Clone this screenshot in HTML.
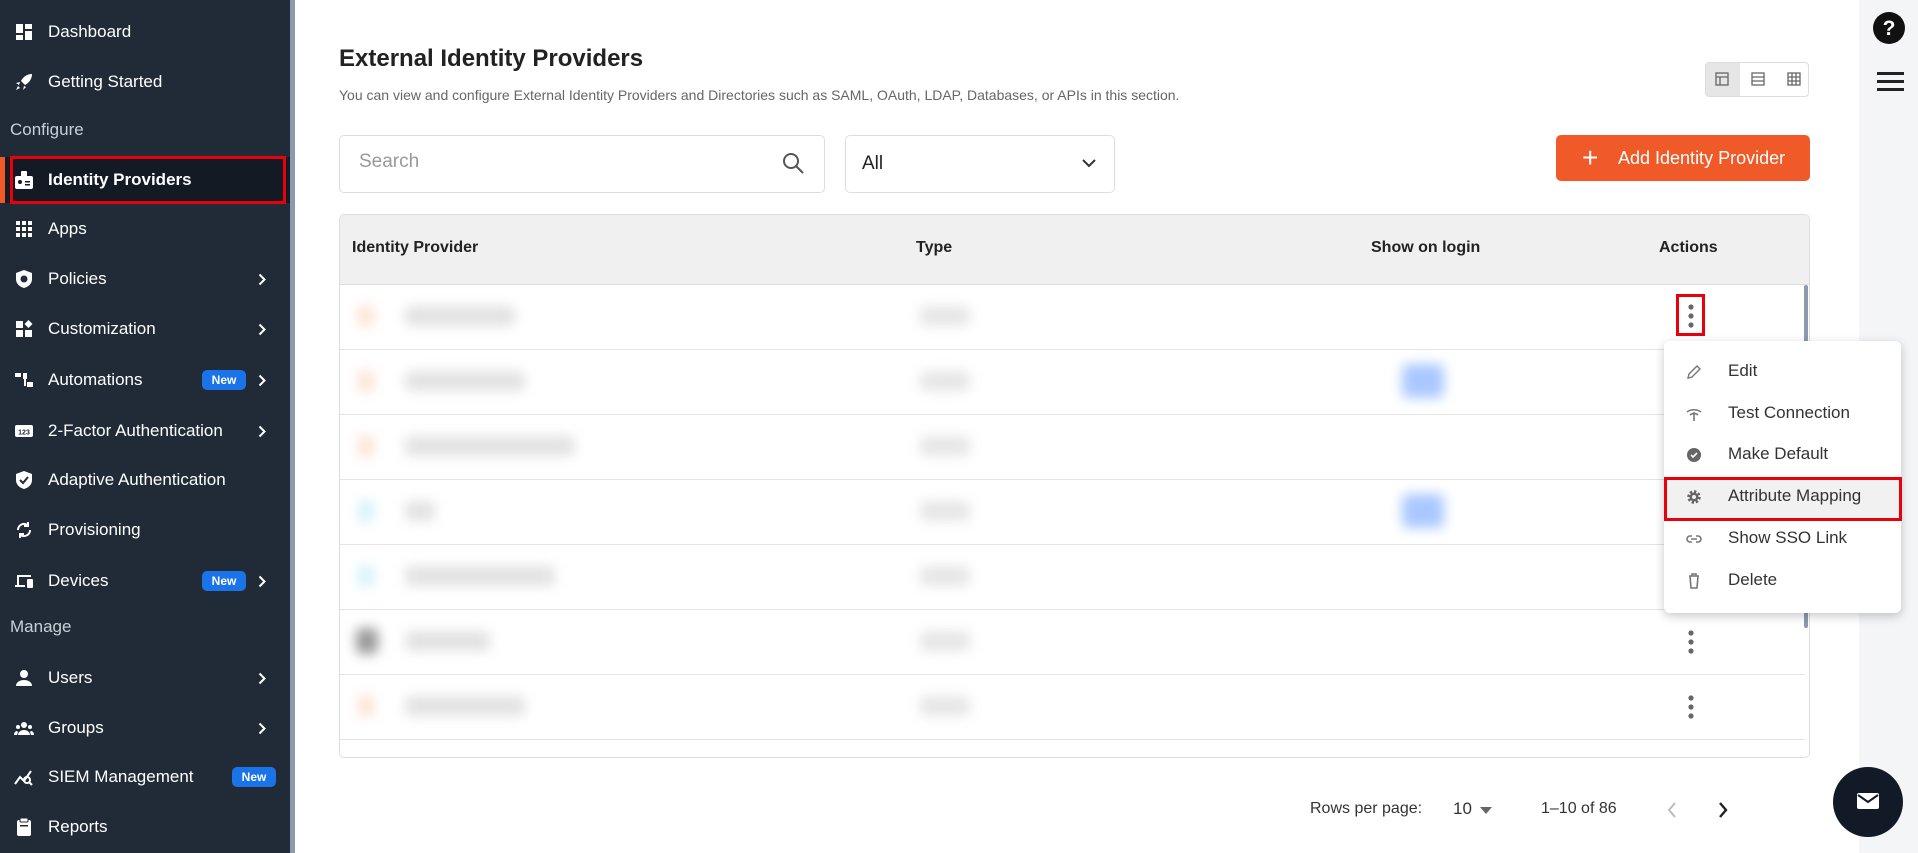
<!DOCTYPE html>
<html><head><meta charset="utf-8"><style>
*{box-sizing:border-box;margin:0;padding:0}
body{width:1918px;height:853px;overflow:hidden;background:#fff;font-family:"Liberation Sans",sans-serif;position:relative;color:#222}
.sb{position:absolute;left:0;top:0;width:290px;height:853px;background:#202b37}
.strip{position:absolute;left:290px;top:0;width:5px;height:853px;background:#8a9bb0}
.it{position:absolute;left:0;width:290px;height:30px;color:#fff;font-size:17px;line-height:30px}
.it .ic{position:absolute;left:14px;top:5px;width:20px;height:20px}
.it .tx{position:absolute;left:48px}
.it .ch{position:absolute;left:258px;top:9px;width:8px;height:13px}
.sec{position:absolute;left:10px;color:#c9cfd6;font-size:17px}
.new{position:absolute;height:20px;line-height:20px;width:44px;background:#1a73e8;border-radius:5px;color:#fff;font-size:12px;font-weight:bold;text-align:center;top:5px}
.rail{position:absolute;left:1859px;top:0;width:59px;height:853px;background:#f4f5f7}
.ab{position:absolute}
.th{position:absolute;top:239px;font-size:16px;font-weight:bold;color:#222}
.row{position:absolute;left:340px;width:1465px;height:1px;background:#e4e4e4}
.blur{position:absolute;border-radius:6px;filter:blur(6px)}
.mi{position:absolute;left:1728px;font-size:17px;color:#333}
.mic{position:absolute;left:1686px;width:16px;height:16px}
</style></head><body>
<svg width="0" height="0" style="position:absolute"><defs><symbol id="chev" viewBox="0 0 8 13"><path d="M1.5 1.5l5 5-5 5" fill="none" stroke="#fff" stroke-width="2"/></symbol></defs></svg>
<div class="sb"></div><div class="strip"></div>
<div style="position:absolute;left:0;top:157px;width:290px;height:46px;background:#131a23"></div>
<div style="position:absolute;left:0;top:157px;width:5px;height:46px;background:#f05a28"></div>
<div style="position:absolute;left:10px;top:156px;width:276px;height:48px;border:3px solid #e8000b"></div>

<div class="it" style="top:17px"><svg class="ic" viewBox="0 0 20 20" fill="#fff"><rect x="2" y="2" width="7" height="9"/><rect x="11" y="2" width="7" height="5"/><rect x="2" y="13" width="7" height="5"/><rect x="11" y="9" width="7" height="9"/></svg><span class="tx">Dashboard</span></div>
<div class="it" style="top:67px"><svg class="ic" viewBox="0 0 20 20" fill="#fff"><path d="M18 2c-5 0-9 3-11 7l4 4c4-2 7-6 7-11zM6 10l-4 1 3 2zM10 14l-1 4 3-3zM4 14l-2 4 4-2z"/></svg><span class="tx">Getting Started</span></div>
<div class="sec" style="top:120px">Configure</div>
<div class="it" style="top:165px;font-weight:bold"><svg class="ic" viewBox="0 0 20 20" fill="#fff"><rect x="1" y="6" width="18" height="13" rx="2"/><rect x="7" y="1" width="6" height="7" rx="1"/><circle cx="6" cy="12" r="2" fill="#131a23"/><rect x="11" y="11" width="5" height="1.5" fill="#131a23"/><rect x="11" y="14" width="5" height="1.5" fill="#131a23"/></svg><span class="tx">Identity Providers</span></div>
<div class="it" style="top:214px"><svg class="ic" viewBox="0 0 20 20" fill="#fff"><g><rect x="2" y="2" width="4" height="4"/><rect x="8" y="2" width="4" height="4"/><rect x="14" y="2" width="4" height="4"/><rect x="2" y="8" width="4" height="4"/><rect x="8" y="8" width="4" height="4"/><rect x="14" y="8" width="4" height="4"/><rect x="2" y="14" width="4" height="4"/><rect x="8" y="14" width="4" height="4"/><rect x="14" y="14" width="4" height="4"/></g></svg><span class="tx">Apps</span></div>
<div class="it" style="top:264px"><svg class="ic" viewBox="0 0 20 20" fill="#fff"><path d="M10 1l8 3v6c0 5-4 8-8 9-4-1-8-4-8-9V4z"/><circle cx="10" cy="10" r="3.5" fill="#202b37"/></svg><span class="tx">Policies</span><svg class="ch"><use href="#chev"/></svg></div>
<div class="it" style="top:314px"><svg class="ic" viewBox="0 0 20 20" fill="#fff"><rect x="2" y="2" width="7" height="7"/><rect x="2" y="11" width="7" height="7"/><rect x="11" y="11" width="7" height="7"/><path d="M14.5 1l4 4-4 4-4-4z"/></svg><span class="tx">Customization</span><svg class="ch"><use href="#chev"/></svg></div>
<div class="it" style="top:365px"><svg class="ic" viewBox="0 0 20 20" fill="#fff"><rect x="1" y="3" width="6" height="4"/><rect x="9" y="3" width="4" height="6"/><rect x="13" y="12" width="6" height="5"/><rect x="10" y="7" width="2" height="9"/></svg><span class="tx">Automations</span><span class="new" style="left:202px">New</span><svg class="ch"><use href="#chev"/></svg></div>
<div class="it" style="top:416px"><svg class="ic" viewBox="0 0 20 20"><rect x="1" y="4" width="18" height="12" rx="2" fill="#fff"/><text x="10" y="13.5" font-size="7" text-anchor="middle" fill="#202b37" font-family="Liberation Sans" font-weight="bold">123</text></svg><span class="tx">2-Factor Authentication</span><svg class="ch"><use href="#chev"/></svg></div>
<div class="it" style="top:465px"><svg class="ic" viewBox="0 0 20 20" fill="#fff"><path d="M10 1l8 3v6c0 5-4 8-8 9-4-1-8-4-8-9V4z"/><path d="M6 10l3 3 5-6" stroke="#202b37" stroke-width="2" fill="none"/></svg><span class="tx">Adaptive Authentication</span></div>
<div class="it" style="top:515px"><svg class="ic" viewBox="0 0 20 20" fill="none" stroke="#fff" stroke-width="2"><path d="M4 10a6 6 0 0 1 10-4.5M16 10a6 6 0 0 1-10 4.5"/><path d="M14 2v4h-4M6 18v-4h4"/></svg><span class="tx">Provisioning</span></div>
<div class="it" style="top:566px"><svg class="ic" viewBox="0 0 20 20" fill="#fff"><path d="M3 4h14v2H5v8H3z"/><rect x="1" y="14" width="10" height="2"/><rect x="13" y="8" width="6" height="9" rx="1"/></svg><span class="tx">Devices</span><span class="new" style="left:202px">New</span><svg class="ch"><use href="#chev"/></svg></div>
<div class="sec" style="top:617px">Manage</div>
<div class="it" style="top:663px"><svg class="ic" viewBox="0 0 20 20" fill="#fff"><circle cx="10" cy="6" r="4"/><path d="M2 18c0-4 4-6 8-6s8 2 8 6z"/></svg><span class="tx">Users</span><svg class="ch"><use href="#chev"/></svg></div>
<div class="it" style="top:713px"><svg class="ic" viewBox="0 0 20 20" fill="#fff"><circle cx="10" cy="7" r="3"/><circle cx="4" cy="9" r="2"/><circle cx="16" cy="9" r="2"/><path d="M4 17c0-3 3-5 6-5s6 2 6 5zM0 17c0-2 1-4 3-4l1 1-1 3zM20 17c0-2-1-4-3-4l-1 1 1 3z"/></svg><span class="tx">Groups</span><svg class="ch"><use href="#chev"/></svg></div>
<div class="it" style="top:762px"><svg class="ic" viewBox="0 0 20 20" fill="none" stroke="#fff" stroke-width="2"><path d="M1 17l5-7 4 4 7-10"/><circle cx="13" cy="13" r="3"/><path d="M15 15l3 3"/></svg><span class="tx">SIEM Management</span><span class="new" style="left:232px">New</span></div>
<div class="it" style="top:812px"><svg class="ic" viewBox="0 0 20 20" fill="#fff"><rect x="3" y="3" width="14" height="16" rx="2"/><rect x="6" y="1" width="8" height="4" rx="1" fill="#fff" stroke="#202b37"/><rect x="6" y="8" width="8" height="1.5" fill="#202b37"/></svg><span class="tx">Reports</span></div>

<div class="rail"></div>
<svg class="ab" style="left:1872px;top:11px" width="34" height="34" viewBox="0 0 34 34"><circle cx="17" cy="17" r="16" fill="#111"/><text x="17" y="24" font-size="21" font-weight="bold" text-anchor="middle" fill="#fff" font-family="Liberation Sans">?</text></svg>
<div class="ab" style="left:1877px;top:72px;width:27px;height:3px;background:#222"></div>
<div class="ab" style="left:1877px;top:80px;width:27px;height:3px;background:#222"></div>
<div class="ab" style="left:1877px;top:88px;width:27px;height:3px;background:#222"></div>
<div class="ab" style="left:1833px;top:767px;width:70px;height:70px;border-radius:50%;background:#111a26"></div>
<svg class="ab" style="left:1856px;top:791px" width="24" height="20" viewBox="0 0 24 20"><rect x="1" y="2" width="22" height="16" rx="2" fill="#fff"/><path d="M2 4l10 7 10-7" stroke="#111a26" stroke-width="2" fill="none"/></svg>

<div class="ab" style="left:339px;top:45px;font-size:24px;font-weight:bold;color:#222">External Identity Providers</div>
<div class="ab" style="left:339px;top:87px;font-size:14px;color:#666">You can view and configure External Identity Providers and Directories such as SAML, OAuth, LDAP, Databases, or APIs in this section.</div>
<div class="ab" style="left:1705px;top:62px;width:104px;height:35px;border:1px solid #ddd;border-radius:4px;background:#fff"></div>
<div class="ab" style="left:1706px;top:63px;width:34px;height:33px;background:#e6e6e6"></div>
<svg class="ab" style="left:1715px;top:72px" width="88" height="14" viewBox="0 0 88 14" fill="none" stroke="#666" stroke-width="1.3"><rect x="1" y="1" width="12" height="12"/><path d="M1 5h12M5 5v8"/><rect x="37" y="1" width="12" height="12"/><path d="M37 5h12M37 9h12"/><rect x="73" y="1" width="12" height="12"/><path d="M73 5h12M73 9h12M77 1v12M81 1v12"/></svg>

<div class="ab" style="left:339px;top:135px;width:486px;height:58px;border:1px solid #ddd;border-radius:5px"></div>
<div class="ab" style="left:359px;top:151px;font-size:19px;color:#999">Search</div>
<svg class="ab" style="left:781px;top:151px" width="24" height="24" viewBox="0 0 24 24" fill="none" stroke="#555" stroke-width="2"><circle cx="10" cy="10" r="7"/><path d="M15 15l7 7"/></svg>
<div class="ab" style="left:845px;top:135px;width:270px;height:58px;border:1px solid #ddd;border-radius:5px"></div>
<div class="ab" style="left:862px;top:153px;font-size:19px;color:#222">All</div>
<svg class="ab" style="left:1082px;top:158px" width="14" height="10" viewBox="0 0 14 10" fill="none" stroke="#333" stroke-width="2"><path d="M1 2l6 6 6-6"/></svg>
<div class="ab" style="left:1556px;top:135px;width:254px;height:46px;background:#f05a28;border-radius:5px;color:#fff;font-size:18px;line-height:46px;padding-left:62px">Add Identity Provider</div>
<div class="ab" style="left:1582px;top:146px;color:#fff;font-size:28px;line-height:24px">+</div>

<div class="ab" style="left:339px;top:214px;width:1471px;height:544px;border:1px solid #ddd;border-radius:5px;overflow:hidden"><div style="height:70px;background:#f0f0f0;border-bottom:1px solid #ddd"></div></div>
<div class="th" style="left:352px">Identity Provider</div>
<div class="th" style="left:916px">Type</div>
<div class="th" style="left:1371px">Show on login</div>
<div class="th" style="left:1659px">Actions</div>
<div class="row" style="top:349px"></div><div class="row" style="top:414px"></div><div class="row" style="top:479px"></div><div class="row" style="top:544px"></div><div class="row" style="top:609px"></div><div class="row" style="top:674px"></div><div class="row" style="top:739px"></div>
<div class="ab" style="left:1804px;top:285px;width:4px;height:343px;background:#8a9bb0;border-radius:2px"></div>

<div class="blur" style="left:358px;top:305px;width:16px;height:22px;background:#fde3d3"></div><div class="blur" style="left:405px;top:306px;width:110px;height:20px;background:#e2e2e2"></div>
<div class="blur" style="left:358px;top:370px;width:16px;height:22px;background:#fde3d3"></div><div class="blur" style="left:405px;top:371px;width:120px;height:20px;background:#e2e2e2"></div>
<div class="blur" style="left:358px;top:435px;width:16px;height:22px;background:#fde3d3"></div><div class="blur" style="left:405px;top:436px;width:170px;height:20px;background:#e2e2e2"></div>
<div class="blur" style="left:358px;top:500px;width:16px;height:22px;background:#d3f2fc"></div><div class="blur" style="left:405px;top:501px;width:30px;height:20px;background:#e2e2e2"></div>
<div class="blur" style="left:358px;top:565px;width:16px;height:22px;background:#d3f2fc"></div><div class="blur" style="left:405px;top:566px;width:150px;height:20px;background:#e2e2e2"></div>
<div class="blur" style="left:356px;top:628px;width:22px;height:26px;background:#999"></div><div class="blur" style="left:405px;top:631px;width:85px;height:20px;background:#e2e2e2"></div>
<div class="blur" style="left:358px;top:695px;width:16px;height:22px;background:#fde3d3"></div><div class="blur" style="left:405px;top:696px;width:120px;height:20px;background:#e2e2e2"></div>
<div class="blur" style="left:920px;top:306px;width:50px;height:20px;background:#e6e6e6"></div>
<div class="blur" style="left:920px;top:371px;width:50px;height:20px;background:#e6e6e6"></div>
<div class="blur" style="left:920px;top:436px;width:50px;height:20px;background:#e6e6e6"></div>
<div class="blur" style="left:920px;top:501px;width:50px;height:20px;background:#e6e6e6"></div>
<div class="blur" style="left:920px;top:566px;width:50px;height:20px;background:#e6e6e6"></div>
<div class="blur" style="left:920px;top:631px;width:50px;height:20px;background:#e6e6e6"></div>
<div class="blur" style="left:920px;top:696px;width:50px;height:20px;background:#e6e6e6"></div>
<div class="blur" style="left:1402px;top:364px;width:42px;height:34px;background:#a9c8ff"></div>
<div class="blur" style="left:1402px;top:494px;width:42px;height:34px;background:#a9c8ff"></div>

<svg class="ab" style="left:1687px;top:303px" width="8" height="26" viewBox="0 0 8 26" fill="#666"><circle cx="4" cy="4" r="2.6"/><circle cx="4" cy="13" r="2.6"/><circle cx="4" cy="22" r="2.6"/></svg>
<div class="ab" style="left:1676px;top:294px;width:29px;height:42px;border:3px solid #e8000b"></div>
<svg class="ab" style="left:1687px;top:629px" width="8" height="26" viewBox="0 0 8 26" fill="#666"><circle cx="4" cy="4" r="2.6"/><circle cx="4" cy="13" r="2.6"/><circle cx="4" cy="22" r="2.6"/></svg>
<svg class="ab" style="left:1687px;top:694px" width="8" height="26" viewBox="0 0 8 26" fill="#666"><circle cx="4" cy="4" r="2.6"/><circle cx="4" cy="13" r="2.6"/><circle cx="4" cy="22" r="2.6"/></svg>

<div class="ab" style="left:1664px;top:341px;width:237px;height:272px;background:#fff;border-radius:6px;box-shadow:0 3px 10px rgba(0,0,0,.22)"></div>
<div class="ab" style="left:1665px;top:480px;width:235px;height:38px;background:#f1f1f1"></div>
<div class="ab" style="left:1664px;top:477px;width:238px;height:44px;border:3px solid #e8000b"></div>
<svg class="mic" style="top:364px" viewBox="0 0 16 16" fill="none" stroke="#777" stroke-width="1.4"><path d="M2 14l1-4 8-8 3 3-8 8z"/></svg>
<div class="mi" style="top:361px">Edit</div>
<svg class="mic" style="top:406px" viewBox="0 0 16 16" fill="none" stroke="#777" stroke-width="1.6"><path d="M1 6c4-3 10-3 14 0M4 9c2-2 6-2 8 0M8 6v9"/></svg>
<div class="mi" style="top:403px">Test Connection</div>
<svg class="mic" style="top:447px" viewBox="0 0 16 16"><circle cx="8" cy="8" r="7" fill="#666"/><path d="M5 8l2 2 4-4" stroke="#fff" stroke-width="1.6" fill="none"/></svg>
<div class="mi" style="top:444px">Make Default</div>
<svg class="mic" style="top:489px" viewBox="0 0 16 16"><circle cx="8" cy="8" r="5" fill="none" stroke="#666" stroke-width="3.5" stroke-dasharray="2.2 1.7"/><circle cx="8" cy="8" r="4.5" fill="#666"/><circle cx="8" cy="8" r="2" fill="#f1f1f1"/></svg>
<div class="mi" style="top:486px">Attribute Mapping</div>
<svg class="mic" style="top:531px" viewBox="0 0 16 16" fill="none" stroke="#777" stroke-width="1.6"><path d="M6 5H4a3 3 0 0 0 0 6h2M10 5h2a3 3 0 0 1 0 6h-2M5 8h6"/></svg>
<div class="mi" style="top:528px">Show SSO Link</div>
<svg class="mic" style="top:573px" viewBox="0 0 16 16" fill="none" stroke="#777" stroke-width="1.6"><path d="M3 3h10M6 3V1h4v2M4 3l1 12h6l1-12"/></svg>
<div class="mi" style="top:570px">Delete</div>

<div class="ab" style="left:1310px;top:800px;font-size:16px;color:#333">Rows per page:</div>
<div class="ab" style="left:1453px;top:799px;font-size:17px;color:#333">10</div>
<svg class="ab" style="left:1480px;top:807px" width="12" height="7" viewBox="0 0 12 7" fill="#666"><path d="M0 0h12L6 7z"/></svg>
<div class="ab" style="left:1541px;top:800px;font-size:16px;color:#333">1–10 of 86</div>
<svg class="ab" style="left:1666px;top:801px" width="12" height="18" viewBox="0 0 12 18" fill="none" stroke="#bbb" stroke-width="2"><path d="M9 2L3 9l6 7"/></svg>
<svg class="ab" style="left:1717px;top:801px" width="12" height="18" viewBox="0 0 12 18" fill="none" stroke="#222" stroke-width="2.4"><path d="M3 2l6 7-6 7"/></svg>
</body></html>
